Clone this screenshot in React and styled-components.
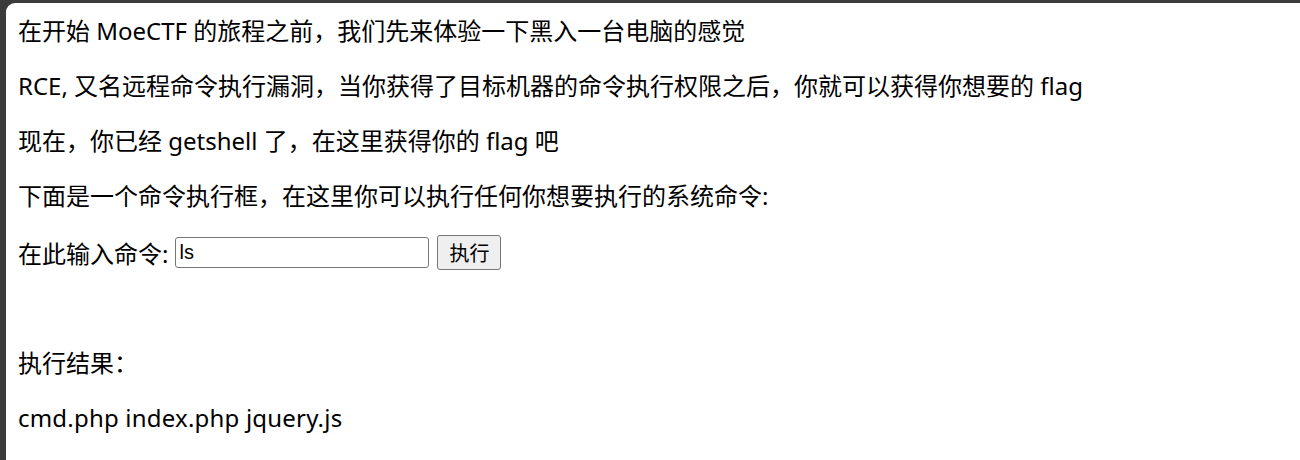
import * as React from "react";
import styled, { createGlobalStyle } from "styled-components";

const GlobalStyle = createGlobalStyle`
  html, body {
    margin: 0;
    padding: 0;
    background: #3b3b3b;
  }
  body {
    font-family: "Noto Sans", "Noto Sans CJK SC", sans-serif;
    color: #000;
  }
`;

const Frame = styled.div`
  padding: 3px 0 0 6px;
  height: 460px;
  box-sizing: border-box;
  overflow: hidden;
`;

const Page = styled.main`
  background: #fff;
  border-top-left-radius: 9px;
  height: 100%;
  padding: 12px 12px 0;
  box-sizing: border-box;
`;

const Line = styled.p`
  margin: 0 0 24px;
  font-size: 24px;
  line-height: 31px;
  letter-spacing: ${(props) => (props.latin ? "0.2px" : "normal")};
  white-space: nowrap;
`;

const CommandForm = styled.form`
  display: flex;
  align-items: center;
  height: 35px;
  margin: 1px 0 77px;
  font-size: 24px;
`;

const Label = styled.label`
  margin-right: 7px;
`;

const CommandInput = styled.input`
  width: 254px;
  height: 31px;
  box-sizing: border-box;
  border: 1px solid #767676;
  border-radius: 3px;
  padding: 0 3px;
  font-family: "Liberation Sans", Arial, sans-serif;
  font-size: 20px;
  color: #000;
  outline: none;
`;

const RunButton = styled.button`
  margin-left: 8px;
  width: 64px;
  height: 35px;
  box-sizing: border-box;
  border: 1px solid #767676;
  border-radius: 3px;
  background: #efefef;
  font-family: "Noto Sans CJK SC", sans-serif;
  font-size: 20px;
  color: #000;
  padding: 0;
`;

export default function App() {
  return (
    <>
      <GlobalStyle />
      <Frame>
        <Page>
          <Line>在开始 MoeCTF 的旅程之前，我们先来体验一下黑入一台电脑的感觉</Line>
          <Line>
            RCE, 又名远程命令执行漏洞，当你获得了目标机器的命令执行权限之后，你就可以获得你想要的 flag
          </Line>
          <Line>现在，你已经 getshell 了，在这里获得你的 flag 吧</Line>
          <Line>下面是一个命令执行框，在这里你可以执行任何你想要执行的系统命令:</Line>
          <CommandForm onSubmit={(e) => e.preventDefault()}>
            <Label htmlFor="cmd">在此输入命令:</Label>
            <CommandInput id="cmd" name="cmd" defaultValue="ls" />
            <RunButton type="submit">执行</RunButton>
          </CommandForm>
          <Line>执行结果：</Line>
          <Line latin>cmd.php index.php jquery.js</Line>
        </Page>
      </Frame>
    </>
  );
}
